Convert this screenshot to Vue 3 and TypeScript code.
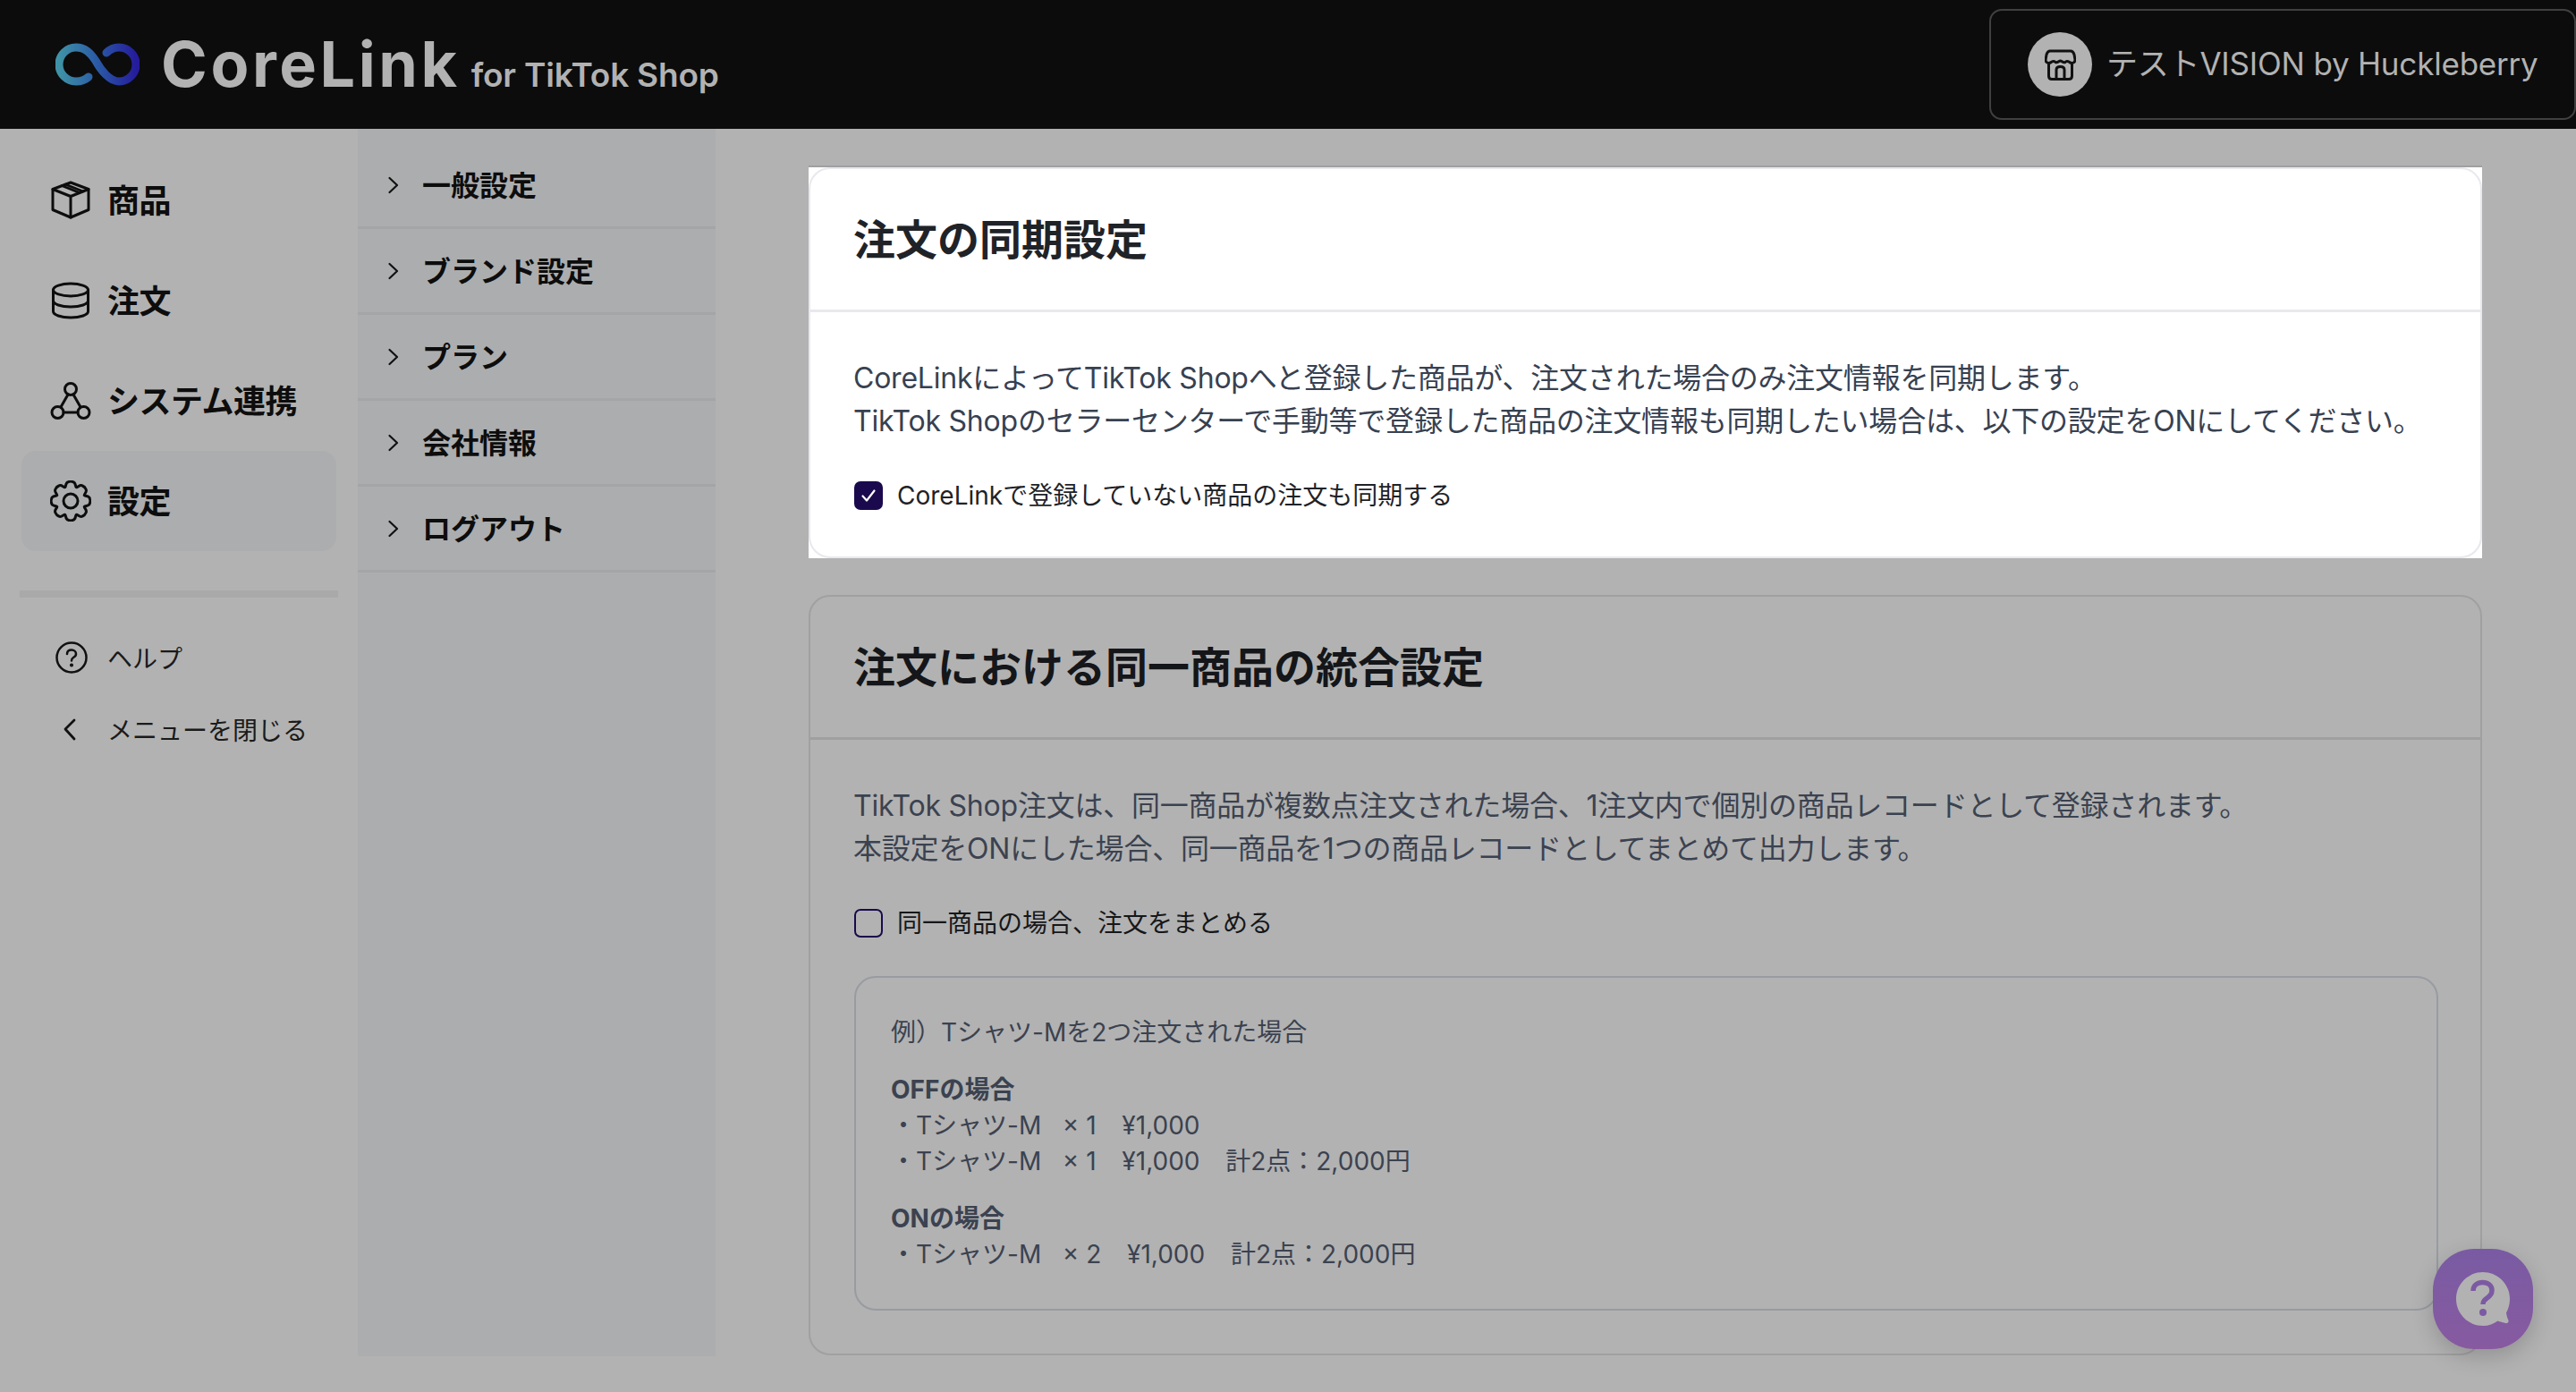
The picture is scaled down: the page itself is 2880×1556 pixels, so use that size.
<template>
  <div class="page">
    <header class="topbar">
      <div class="brand">
        <svg class="logo" width="94" height="48" viewBox="0 0 94 48" fill="none">
          <defs>
            <linearGradient id="logoGrad" x1="0" y1="0" x2="1" y2="0">
              <stop offset="0" stop-color="#3f92a6" />
              <stop offset="0.5" stop-color="#2a5aa6" />
              <stop offset="1" stop-color="#251c9c" />
            </linearGradient>
          </defs>
          <path
            d="M37 38C33 41.500 28 43 23 43A19 19 0 0 1 23 5C33 5 39 11 45 20C51 31 61 43 71 43A19 19 0 0 0 71 5C66 5 61 7 57 11"
            stroke="url(#logoGrad)"
            stroke-width="9"
            stroke-linecap="round"
          />
        </svg>
        <span class="brand-name">CoreLink</span>
        <span class="brand-sub">for TikTok Shop</span>
      </div>
      <div class="account">
        <span class="account-icon">
          <svg width="35" height="35" viewBox="0 0 35 35" fill="none" stroke="#111" stroke-width="3" stroke-linejoin="round" stroke-linecap="round">
            <path d="M6 2H29C31 2 32 3 33 6L34 12C34 15 31 16 28.500 15C26 13 24 13 23 14.500C21 16 19 13 17.500 13C16 13 14 16 12 14.500C11 13 9 13 6.500 15C4 16 1 15 1 12L2 6C3 3 4 2 6 2Z" />
            <path d="M4.500 17V30C4.500 32.500 5.500 33.500 8 33.500H27C29.500 33.500 30.500 32.500 30.500 30V17" />
            <path d="M13 33V23C13 20.500 14.500 19.500 17.500 19.500C20.500 19.500 22 20.500 22 23V33" />
          </svg>
        </span>
        <span class="account-name">テストVISION by Huckleberry</span>
      </div>
    </header>

    <div class="body">
      <nav class="side">
        <a v-for="item in navItems" :key="item.label" class="nav-item" :class="{ active: item.active }">
          <svg class="nav-icon" width="46" height="46" viewBox="0 0 46 46" fill="none" stroke="#0d0d0d" stroke-width="3" stroke-linejoin="round" stroke-linecap="round">
            <template v-if="item.icon === 'box'">
              <path d="M23 3L43 10.500V33.500L23 42L3 33.500V10.500Z" />
              <path d="M3 10.500L23 18.500L43 10.500M23 18.500V42" />
              <path d="M13 6.500L33 14.500M17 5L37 13" stroke-width="2.500" />
            </template>
            <template v-else-if="item.icon === 'stack'">
              <ellipse cx="23" cy="11" rx="19.500" ry="7" />
              <path d="M3.500 11V35C3.500 39 12 42 23 42C34 42 42.500 39 42.500 35V11" />
              <path d="M3.500 23C3.500 27 12 30 23 30C34 30 42.500 27 42.500 23" />
            </template>
            <template v-else-if="item.icon === 'nodes'">
              <circle cx="23" cy="10" r="6.500" />
              <circle cx="8.500" cy="36" r="6.500" />
              <circle cx="37.500" cy="36" r="6.500" />
              <path d="M20 16L12 30M26 16L34 30M15 36H31" />
            </template>
            <template v-else>
              <path :d="gearPath" />
              <circle cx="23" cy="23" r="8" />
            </template>
          </svg>
          <span class="nav-label">{{ item.label }}</span>
        </a>
        <div class="side-rule"></div>
        <a class="sub-link">
          <svg class="link-icon" width="36" height="36" viewBox="0 0 36 36" fill="none" stroke="#111" stroke-width="2.500" stroke-linecap="round" stroke-linejoin="round">
            <circle cx="18" cy="18" r="16.500" />
            <path d="M13 14C13 11 15 9.500 18 9.500C21 9.500 23 11.500 23 14C23 16 22 17 20 18C18.500 19 18 20 18 21.500" />
            <circle cx="18" cy="26.500" r="0.800" fill="#111" />
          </svg>
          <span>ヘルプ</span>
        </a>
        <a class="sub-link">
          <svg class="link-icon" width="36" height="36" viewBox="0 0 36 36" fill="none" stroke="#111" stroke-width="2.800" stroke-linecap="round" stroke-linejoin="round">
            <path d="M21 8L11 18L21 29" />
          </svg>
          <span>メニューを閉じる</span>
        </a>
      </nav>

      <aside class="subnav">
        <a v-for="label in subItems" :key="label" class="subnav-item">
          <svg width="14" height="20" viewBox="0 0 14 20" fill="none" stroke="#111" stroke-width="2.200" stroke-linecap="round" stroke-linejoin="round">
            <path d="M2.500 2L11 10L2.500 18" />
          </svg>
          <span class="subnav-label">{{ label }}</span>
        </a>
      </aside>

      <main class="main">
        <div class="highlight">
          <section class="card card-lit">
            <h2 class="card-title">注文の同期設定</h2>
            <div class="card-body">
              <p class="lead">
                CoreLinkによってTikTok Shopへと登録した商品が、注文された場合のみ注文情報を同期します。<br />
                TikTok Shopのセラーセンターで手動等で登録した商品の注文情報も同期したい場合は、以下の設定をONにしてください。
              </p>
              <label class="check">
                <span class="box checked">
                  <svg width="22" height="22" viewBox="0 0 22 22" fill="none" stroke="#fff" stroke-width="2.200" stroke-linecap="round" stroke-linejoin="round">
                    <path d="M4.500 11.500L9 16.500L17.500 5.500" />
                  </svg>
                </span>
                <span>CoreLinkで登録していない商品の注文も同期する</span>
              </label>
            </div>
          </section>
        </div>

        <section class="card">
          <h2 class="card-title">注文における同一商品の統合設定</h2>
          <div class="card-body">
            <p class="lead">
              TikTok Shop注文は、同一商品が複数点注文された場合、1注文内で個別の商品レコードとして登録されます。<br />
              本設定をONにした場合、同一商品を1つの商品レコードとしてまとめて出力します。
            </p>
            <label class="check">
              <span class="box"></span>
              <span>同一商品の場合、注文をまとめる</span>
            </label>
            <div class="example">
              <p class="example-head">例）Tシャツ-Mを2つ注文された場合</p>
              <div v-for="group in examples" :key="group.title" class="example-group">
                <strong>{{ group.title }}</strong>
                <span v-for="(line, i) in group.lines" :key="i" class="example-line">{{ line }}</span>
              </div>
            </div>
          </div>
        </section>
      </main>
    </div>

    <button class="chat" aria-label="help">
      <svg width="64" height="64" viewBox="0 0 64 64">
        <path
          d="M32 2C48.500 2 62 15.500 62 32C62 38 60.500 43 58 47.500C58.500 51 59.500 54 60.500 56C61 58.500 59 59.500 57 59C54 58.500 51 57.500 48.500 56.500C44 60 38.500 62 32 62C15.500 62 2 48.500 2 32C2 15.500 15.500 2 32 2Z"
          fill="#b2b2b2"
        />
        <path d="M21 23C21 16.500 26 13.500 31.500 13.500C37.500 13.500 42 17 42 22.500C42 27 39.500 29 36.500 31C33.500 33 32 34.500 32 38" fill="none" stroke="#7c5aa3" stroke-width="5.500" />
        <circle cx="32" cy="47" r="4" fill="#7c5aa3" />
      </svg>
    </button>
  </div>
</template>

<script setup lang="ts">
type NavIcon = 'box' | 'stack' | 'nodes' | 'gear'

const navItems: Array<{ label: string; icon: NavIcon; active?: boolean }> = [
  { label: '商品', icon: 'box' },
  { label: '注文', icon: 'stack' },
  { label: 'システム連携', icon: 'nodes' },
  { label: '設定', icon: 'gear', active: true },
]

const subItems = ['一般設定', 'ブランド設定', 'プラン', '会社情報', 'ログアウト']

const examples = [
  {
    title: 'OFFの場合',
    lines: ['・Tシャツ-M   × 1   \u2009¥1,000', '・Tシャツ-M   × 1   \u2009¥1,000   \u2009計2点：2,000円'],
  },
  {
    title: 'ONの場合',
    lines: ['・Tシャツ-M   × 2   \u2009¥1,000   \u2009計2点：2,000円'],
  },
]

// 8 toothed gear outline, centred in the 46 box
const gearPath = (() => {
  const teeth = 8
  const pt = (r: number, a: number) => `${(23 + r * Math.cos(a)).toFixed(2)} ${(23 + r * Math.sin(a)).toFixed(2)}`
  const step = (Math.PI * 2) / teeth
  let d = ''
  for (let i = 0; i < teeth; i++) {
    const a = i * step - Math.PI / 2
    const start = pt(16.5, a - step * 0.5)
    if (i === 0) d += `M${start}`
    d += `C${pt(17.5, a - step * 0.36)} ${pt(21.5, a - step * 0.36)} ${pt(21.5, a - step * 0.16)}`
    d += `Q${pt(22.5, a)} ${pt(21.5, a + step * 0.16)}`
    d += `C${pt(21.5, a + step * 0.36)} ${pt(17.5, a + step * 0.36)} ${pt(16.5, a + step * 0.5)}`
  }
  return d + 'Z'
})()
</script>

<style>
html, body { margin: 0; background: #b2b2b2; }
</style>

<style scoped>
.page {
  position: relative;
  height: 1556px;
  overflow: hidden;
  display: flex;
  flex-direction: column;
  background: #b2b2b2;
  color: #0d0d0d;
  font-family: Inter, "Noto Sans CJK JP", sans-serif;
}

.topbar { flex: none; height: 144px; display: flex; align-items: center; justify-content: space-between; background: #0c0c0c; color: #b2b2b2; padding-left: 62px; box-sizing: border-box; }
.brand { display: flex; align-items: baseline; }
.logo { align-self: center; margin-right: 24px; }
.brand-name { font-size: 70px; font-weight: 700; line-height: 1; letter-spacing: 3.6px; }
.brand-sub { margin-left: 12px; font-size: 37px; font-weight: 600; letter-spacing: -0.2px; }
.account { width: 656px; height: 124px; box-sizing: border-box; display: flex; align-items: center; gap: 16px; padding-left: 41px; border: 2px solid #404040; border-radius: 14px; }
.account-icon { flex: none; width: 72px; height: 72px; border-radius: 50%; background: #b2b2b2; display: flex; align-items: center; justify-content: center; }
.account-name { font-size: 35px; line-height: 40px; margin-top: -2px; white-space: nowrap; letter-spacing: -0.2px; }

.body { flex: 1; min-height: 0; display: flex; }

.side { flex: none; width: 400px; padding: 0 22px; box-sizing: border-box; padding-top: 24px; }
.nav-item { display: flex; align-items: center; gap: 18px; height: 112px; margin: 0 2px; padding-left: 32px; border-radius: 16px; font-size: 36px; font-weight: 700; }
.nav-item.active { background: #acadaf; }
.nav-icon { flex: none; }
.nav-label { margin-top: -4px; letter-spacing: -0.5px; }
.side-rule { height: 8px; margin-top: 44px; margin-bottom: 27px; background: #a9a9a9; }
.sub-link { display: flex; align-items: center; gap: 22px; height: 80px; padding-left: 40px; font-size: 28px; color: #1a1a1a; }
.link-icon { flex: none; }

.subnav { flex: none; width: 400px; height: 1372px; padding-top: 16px; box-sizing: border-box; background: #acadaf; }
.subnav-item { display: flex; align-items: center; gap: 25px; height: 96px; padding-left: 33px; box-sizing: border-box; border-bottom: 3px solid #a4a5a7; font-size: 32px; font-weight: 700; }
.subnav-label { margin-top: -4px; }

.main { flex: 1; min-width: 0; display: flex; flex-direction: column; gap: 41px; padding: 43px 105px 0 104px; }
.highlight { background: #fff; box-shadow: 0 -2px 0 #a0a0a0; }
.card { border: 2px solid #a0a0a0; border-radius: 24px; color: #3b4250; }
.card-lit { border-color: #e8e8ee; color: #374151; }
.card-title { margin: 0; height: 160px; box-sizing: border-box; display: flex; align-items: center; padding: 0 48px 6px; border-bottom: 3px solid #a0a0a0; font-size: 47px; font-weight: 700; color: #141619; }
.card-lit .card-title { border-bottom-color: #e8e8ee; color: #1f2328; }
.card-body { padding: 50px 48px 48px; }
.lead { margin: 0; font-size: 32px; line-height: 48px; letter-spacing: -0.22px; white-space: nowrap; }
.check { display: flex; align-items: center; gap: 16px; margin: 39px 0 0 1px; font-size: 28px; line-height: 40px; color: #15171a; }
.card-lit .check { color: #1f2328; }
.box { flex: none; width: 32px; height: 32px; box-sizing: border-box; display: flex; align-items: center; justify-content: center; border: 2px solid #1a0a4d; border-radius: 7px; }
.box.checked { background: #1a0a4d; }

.example { margin: 39px -1px 0 1px; padding: 41px 39px; border: 2px solid #989ba1; border-radius: 24px; font-size: 28px; line-height: 40px; }
.example-head { margin: 0; }
.example-group { margin-top: 24px; display: flex; flex-direction: column; }
.example-group strong { font-weight: 700; }
.example-line { white-space: pre; }

.chat {
  position: absolute;
  left: 2720px;
  top: 1396px;
  width: 112px;
  height: 112px;
  padding: 0;
  display: flex;
  align-items: center;
  justify-content: center;
  border: 0;
  border-radius: 46px;
  background: linear-gradient(180deg, #795ba3, #875aa0);
  box-shadow: 0 8px 24px rgba(0, 0, 0, 0.18);
}
</style>
